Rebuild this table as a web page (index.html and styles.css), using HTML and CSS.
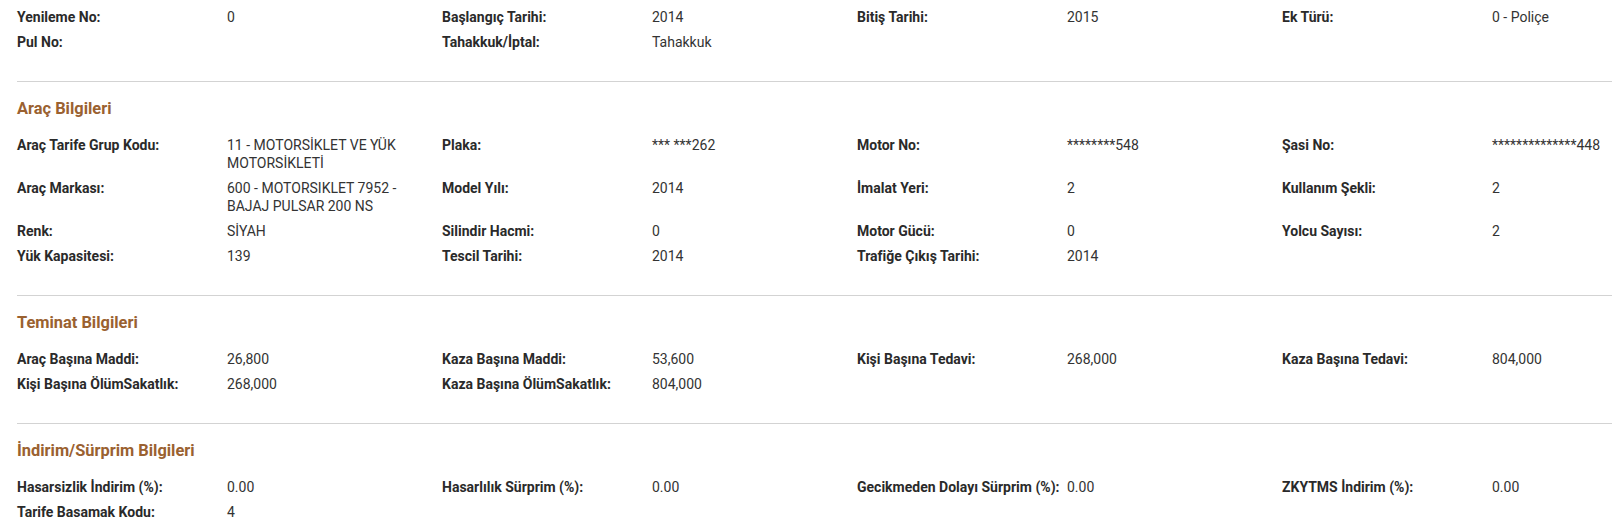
FILE: index.html
```html
<!DOCTYPE html>
<html lang="tr">
<head>
<meta charset="utf-8">
<title>Poliçe Detayı</title>
<link rel="stylesheet" href="styles.css">
</head>
<body>
<div class="page">
  <div class="grid first">
    <div class="lbl">Yenileme No:</div><div class="val">0</div>
    <div class="lbl">Başlangıç Tarihi:</div><div class="val">2014</div>
    <div class="lbl">Bitiş Tarihi:</div><div class="val">2015</div>
    <div class="lbl">Ek Türü:</div><div class="val">0 - Poliçe</div>
    <div class="lbl">Pul No:</div><div class="val"></div>
    <div class="lbl">Tahakkuk/İptal:</div><div class="val">Tahakkuk</div>
  </div>
  <div class="sep"></div>

  <h3 class="title">Araç Bilgileri</h3>
  <div class="grid">
    <div class="lbl">Araç Tarife Grup Kodu:</div><div class="val">11 - MOTORSİKLET VE YÜK MOTORSİKLETİ</div>
    <div class="lbl">Plaka:</div><div class="val">*** ***262</div>
    <div class="lbl">Motor No:</div><div class="val">********548</div>
    <div class="lbl">Şasi No:</div><div class="val">**************448</div>
    <div class="lbl">Araç Markası:</div><div class="val">600 - MOTORSIKLET 7952 - BAJAJ PULSAR 200 NS</div>
    <div class="lbl">Model Yılı:</div><div class="val">2014</div>
    <div class="lbl">İmalat Yeri:</div><div class="val">2</div>
    <div class="lbl">Kullanım Şekli:</div><div class="val">2</div>
    <div class="lbl">Renk:</div><div class="val">SİYAH</div>
    <div class="lbl">Silindir Hacmi:</div><div class="val">0</div>
    <div class="lbl">Motor Gücü:</div><div class="val">0</div>
    <div class="lbl">Yolcu Sayısı:</div><div class="val">2</div>
    <div class="lbl">Yük Kapasitesi:</div><div class="val">139</div>
    <div class="lbl">Tescil Tarihi:</div><div class="val">2014</div>
    <div class="lbl">Trafiğe Çıkış Tarihi:</div><div class="val">2014</div>
  </div>
  <div class="sep"></div>

  <h3 class="title">Teminat Bilgileri</h3>
  <div class="grid">
    <div class="lbl">Araç Başına Maddi:</div><div class="val">26,800</div>
    <div class="lbl">Kaza Başına Maddi:</div><div class="val">53,600</div>
    <div class="lbl">Kişi Başına Tedavi:</div><div class="val">268,000</div>
    <div class="lbl">Kaza Başına Tedavi:</div><div class="val">804,000</div>
    <div class="lbl">Kişi Başına ÖlümSakatlık:</div><div class="val">268,000</div>
    <div class="lbl">Kaza Başına ÖlümSakatlık:</div><div class="val">804,000</div>
  </div>
  <div class="sep"></div>

  <h3 class="title">İndirim/Sürprim Bilgileri</h3>
  <div class="grid">
    <div class="lbl">Hasarsizlik İndirim (%):</div><div class="val">0.00</div>
    <div class="lbl">Hasarlılık Sürprim (%):</div><div class="val">0.00</div>
    <div class="lbl">Gecikmeden Dolayı Sürprim (%):</div><div class="val">0.00</div>
    <div class="lbl">ZKYTMS İndirim (%):</div><div class="val">0.00</div>
    <div class="lbl">Tarife Basamak Kodu:</div><div class="val">4</div>
  </div>
</div>
</body>
</html>
```

FILE: styles.css
```css
html, body {
  margin: 0;
  padding: 0;
  background: #ffffff;
}

body {
  font-family: Roboto, "Liberation Sans", Arial, sans-serif;
  color: #333333;
}

.page {
  padding: 8px 0 0 17px;
}

.grid {
  display: grid;
  grid-template-columns: 210px 215px 210px 205px 210px 215px 210px 1fr;
  row-gap: 7px;
  align-items: start;
}

.lbl {
  font-size: 14px;
  font-weight: 700;
  line-height: 18px;
  color: #2a2a2a;
  padding-right: 4px;
}

.val {
  font-size: 14px;
  font-weight: 400;
  line-height: 18px;
  color: #333333;
  padding-right: 10px;
  white-space: normal;
}

.sep {
  height: 1px;
  background: #d3d3d3;
  margin-top: 30px;
}

.title {
  margin: 18px 0 18px 0;
  font-size: 16.4px;
  font-weight: 700;
  line-height: 18px;
  color: #9a6130;
}
```
